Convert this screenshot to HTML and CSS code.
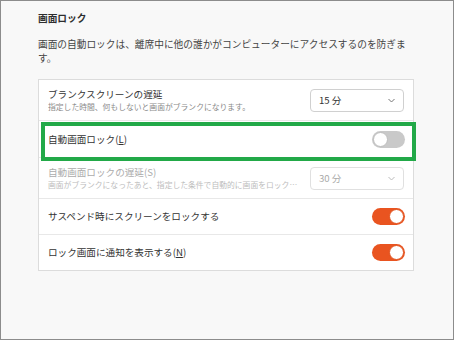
FILE: index.html
```html
<!DOCTYPE html>
<html lang="ja">
<head>
    <meta charset="UTF-8">
    <meta name="viewport" content="width=device-width, initial-scale=1.0">
    <title>画面ロック</title>
    <link rel="stylesheet" href="styles.css">
</head>
<body>
    <div class="frame">
        <h3 class="page-title">画面ロック</h3>
        <p class="page-desc">画面の自動ロックは、離席中に他の誰かがコンピューターにアクセスするのを防ぎます。</p>

        <div class="card">
            <div class="row row-tall">
                <div class="label">
                    <div class="title">ブランクスクリーンの遅延</div>
                    <div class="subtitle">指定した時間、何もしないと画面がブランクになります。</div>
                </div>
                <div class="dropdown">
                    <span>15 分</span>
                    <svg class="chevron" width="7" height="5" viewBox="0 0 7 5"><polyline points="0.5,1 3.5,4 6.5,1" fill="none" stroke="#777" stroke-width="1"/></svg>
                </div>
            </div>

            <div class="row row-focus">
                <div class="label">
                    <div class="title">自動画面ロック(<u>L</u>)</div>
                </div>
                <div class="toggle"><div class="knob"></div></div>
                <div class="highlight"></div>
            </div>

            <div class="row row-tall disabled">
                <div class="label">
                    <div class="title">自動画面ロックの遅延(S)</div>
                    <div class="subtitle">画面がブランクになったあと、指定した条件で自動的に画面をロックします。</div>
                </div>
                <div class="dropdown">
                    <span>30 分</span>
                    <svg class="chevron" width="7" height="5" viewBox="0 0 7 5"><polyline points="0.5,1 3.5,4 6.5,1" fill="none" stroke="#bbb" stroke-width="1"/></svg>
                </div>
            </div>

            <div class="row">
                <div class="label">
                    <div class="title">サスペンド時にスクリーンをロックする</div>
                </div>
                <div class="toggle on"><div class="knob"></div></div>
            </div>

            <div class="row last">
                <div class="label">
                    <div class="title">ロック画面に通知を表示する(<u>N</u>)</div>
                </div>
                <div class="toggle on"><div class="knob"></div></div>
            </div>
        </div>
    </div>
</body>
</html>
```

FILE: styles.css
```css
body {
    margin: 0;
    font-family: "Noto Sans CJK JP", "Noto Sans", sans-serif;
    color: #333;
}

.frame {
    width: 454px;
    height: 340px;
    box-sizing: border-box;
    border: 1px solid #8c8c8c;
    background: #f8f8f8;
    padding: 10px 39px 0 37px;
}

.page-title {
    margin: 0;
    font-size: 9.7px;
    line-height: 14px;
    font-weight: bold;
    color: #2e2e2e;
}

.page-desc {
    margin: 12px 0 0;
    font-size: 9.7px;
    line-height: 14px;
    color: #444;
}

.card {
    margin-top: 14px;
    background: #fff;
    border: 1px solid #dcdcdc;
}

.row {
    position: relative;
    display: flex;
    align-items: center;
    gap: 6px;
    height: 35px;
    padding: 0 9px;
    border-bottom: 1px solid #e8e8e8;
}

.row-tall {
    height: 40px;
}

.row-focus {
    height: 36px;
}

.row.last {
    border-bottom: none;
}

.label {
    flex: 1;
    min-width: 0;
}

.title {
    font-size: 9.6px;
    line-height: 13px;
    color: #333;
    white-space: nowrap;
}

.title u {
    text-underline-offset: 1px;
}

.subtitle {
    font-size: 7.8px;
    line-height: 12px;
    color: #8a8a8a;
    white-space: nowrap;
    overflow: hidden;
    text-overflow: ellipsis;
}

.disabled .title {
    color: #ababab;
}

.disabled .subtitle {
    color: #bdbdbd;
}

.dropdown {
    width: 94px;
    height: 23px;
    box-sizing: border-box;
    border: 1px solid #d0d0d0;
    border-radius: 4px;
    background: #fff;
    display: flex;
    align-items: center;
    justify-content: space-between;
    padding: 0 8px 0 8px;
    font-size: 9.6px;
    color: #333;
}

.disabled .dropdown {
    border-color: #e0e0e0;
    color: #aaa;
}

.toggle {
    width: 33px;
    height: 17px;
    box-sizing: border-box;
    border-radius: 9px;
    background: #c9c9c9;
    display: flex;
    align-items: center;
    padding: 1px;
    margin-right: -1px;
}

.knob {
    width: 15px;
    height: 15px;
    box-sizing: border-box;
    border-radius: 50%;
    background: #fff;
    border: 1px solid #bdbdbd;
}

.toggle.on {
    background: #e95420;
    justify-content: flex-end;
}

.toggle.on .knob {
    border-color: #e0531f;
}

.highlight {
    position: absolute;
    left: 2px;
    top: 1px;
    width: 375px;
    height: 39px;
    box-sizing: border-box;
    border: 4px solid #22a948;
    pointer-events: none;
}
```
